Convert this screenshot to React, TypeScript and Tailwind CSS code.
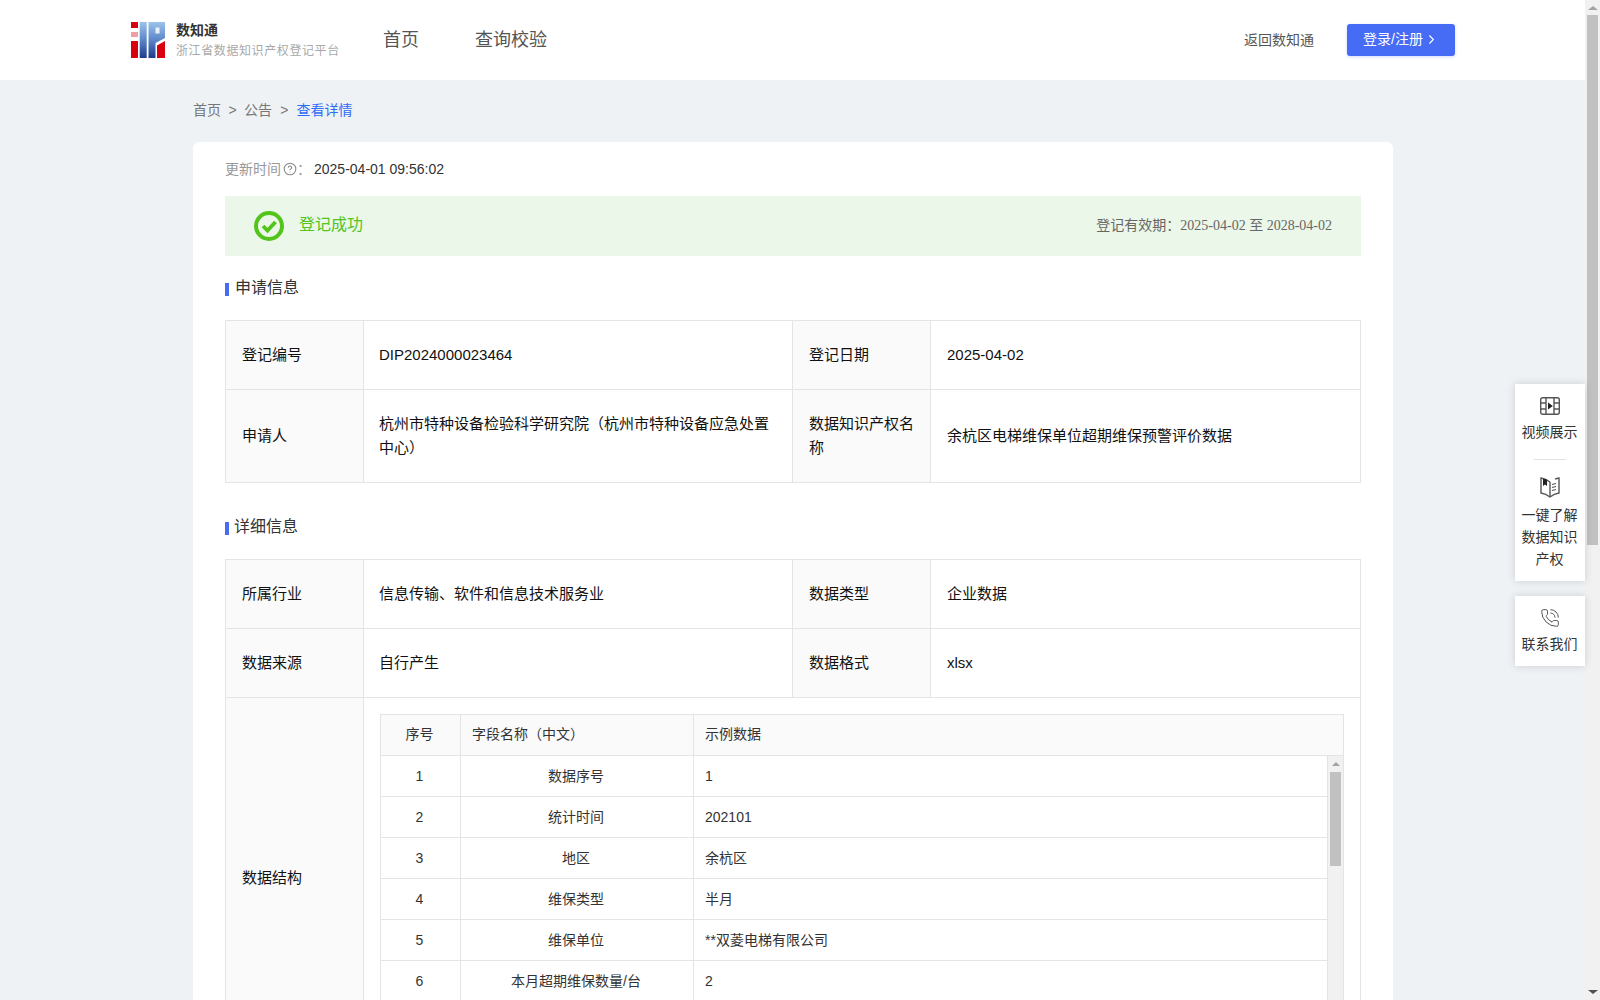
import { ChevronRight, CircleHelp, PhoneCall } from "lucide-react";

const FONT = "[font-family:'Liberation_Sans','Noto_Sans_CJK_SC',sans-serif]";

function Logo() {
  return (
    <svg width="34" height="36" viewBox="0 0 34 36" className="shrink-0">
      <defs>
        <linearGradient id="lg" x1="0" y1="0" x2="0" y2="1">
          <stop offset="0" stopColor="#9cc3ea" />
          <stop offset="0.5" stopColor="#5c86c8" />
          <stop offset="1" stopColor="#1d3a8c" />
        </linearGradient>
      </defs>
      <rect x="0" y="0" width="7" height="6" fill="#d9000f" />
      <rect x="0" y="10" width="7" height="5" fill="#f0a0a5" />
      <rect x="0" y="19" width="7" height="17" fill="#d9000f" />
      <rect x="8.7" y="0" width="7" height="36" fill="url(#lg)" />
      <path d="M17.5 0H34V16L24.5 21V36H17.5Z" fill="url(#lg)" />
      <rect x="24.5" y="5.5" width="4" height="6" fill="#e8f1fb" />
      <path d="M26 23.5L34 19V36H26Z" fill="#d9000f" />
    </svg>
  );
}

function FilmIcon() {
  return (
    <svg width="20" height="18" viewBox="0 0 20 18" fill="none" stroke="#555" strokeWidth="1.4">
      <rect x="0.7" y="0.7" width="18.6" height="16.6" rx="2" />
      <path d="M6 1V17M14 1V17M1 6H6M1 12H6M14 6H19M14 12H19" />
      <path d="M8 5.4L12.8 9L8 12.6Z" fill="#222" stroke="none" />
    </svg>
  );
}

function BookIcon() {
  return (
    <svg width="20" height="21" viewBox="0 0 20 21" fill="none" stroke="#555" strokeWidth="1.4">
      <path d="M10 5C7.5 3 4.5 1.5 1 1V16C4.5 16.5 7.5 18 10 20C12.5 18 15.5 16.5 19 16V1C17.5 1.2 16.2 1.6 15 2.2" />
      <path d="M10 5V20" />
      <path d="M3 1.4V9L5 7.5L7 9V2.8Z" fill="#222" stroke="none" />
      <path d="M12 7.5L16 6.5M12 10.5L16 9.5M12 13.5L16 12.5" strokeWidth="1.1" />
    </svg>
  );
}

function SuccessIcon() {
  return (
    <svg width="30" height="30" viewBox="0 0 30 30" fill="none" className="shrink-0">
      <circle cx="15" cy="15" r="13" stroke="#52c41a" strokeWidth="4" />
      <path d="M9 15L13.5 19.5L21.5 11" stroke="#52c41a" strokeWidth="3.8" />
    </svg>
  );
}

function Heading({ title, gap }: { title: string; gap: string }) {
  return (
    <div className="flex items-center h-[26px]">
      <span className="w-1 h-[13px] bg-[#466cf5] mt-[2px]" />
      <span className={`${gap} text-base text-[#333]`}>{title}</span>
    </div>
  );
}

const labelCell = "border border-[#e4e4e4] bg-[#fafafa] px-4 py-0 text-[15px] leading-6 text-[#111] font-normal text-left";
const valueCell = "border border-[#e4e4e4] bg-white px-4 py-0 text-[15px] leading-6 text-[#111] font-normal text-left";
const valueCellFirst = "border border-[#e4e4e4] bg-white pl-[15px] pr-4 py-0 text-[15px] leading-6 text-[#111] font-normal text-left";

const rows = [
  ["1", "数据序号", "1"],
  ["2", "统计时间", "202101"],
  ["3", "地区", "余杭区"],
  ["4", "维保类型", "半月"],
  ["5", "维保单位", "**双菱电梯有限公司"],
  ["6", "本月超期维保数量/台", "2"],
];

function InnerTable() {
  return (
    <div className="border-l border-r border-t border-[#e4e4e4] w-[964px]">
      <div className="grid grid-cols-[80px_233px_1fr] h-[41px] bg-[#fafafa] border-b border-[#e4e4e4] text-sm text-[#333] items-center">
        <div className="h-full flex items-center justify-center border-r border-[#e4e4e4] pb-[2px] pr-[2px]">序号</div>
        <div className="h-full flex items-center pl-[11px] border-r border-[#e4e4e4] pb-[2px]">字段名称（中文）</div>
        <div className="pl-[11px] pb-[2px]">示例数据</div>
      </div>
      <div className="flex h-[286px] overflow-hidden">
        <div className="flex-1 min-w-0">
          {rows.map((r) => (
            <div key={r[0]} className="grid grid-cols-[80px_233px_1fr] h-[41px] border-b border-r border-[#e4e4e4] text-sm text-[#333] items-center">
              <div className="h-full flex items-center justify-center border-r border-[#e4e4e4] pr-[2px]">{r[0]}</div>
              <div className="h-full flex items-center justify-center border-r border-[#e4e4e4] pr-[2px]">{r[1]}</div>
              <div className="pl-[11px]">{r[2]}</div>
            </div>
          ))}
        </div>
        <div className="w-[15px] shrink-0 bg-[#f1f1f1] flex flex-col items-center">
          <div className="mt-[6px] w-0 h-0 border-l-[4px] border-r-[4px] border-b-[4px] border-l-transparent border-r-transparent border-b-[#a3a3a3]" />
          <div className="mt-[6px] w-[11px] h-[94px] bg-[#c1c1c1]" />
        </div>
      </div>
    </div>
  );
}

export default function App() {
  return (
    <div className={`relative flex h-screen w-full overflow-hidden bg-[#eff2f5] ${FONT}`}>
      <div className="flex-1 min-w-0 overflow-hidden">
        <header className="h-20 bg-white flex items-center pl-[131px] pr-[130px]">
          <Logo />
          <div className="ml-[11px] w-[207px] shrink-0 pt-[1px]">
            <div className="text-sm font-bold leading-[18px] text-[#333]">数知通</div>
            <div className="mt-[3px] text-xs tracking-[0.6px] leading-[18px] text-[#a9a9a9]">浙江省数据知识产权登记平台</div>
          </div>
          <nav className="flex gap-[56px] text-lg text-[#555]">
            <span>首页</span>
            <span>查询校验</span>
          </nav>
          <div className="ml-auto text-sm text-[#555]">返回数知通</div>
          <button className="ml-[33px] w-[108px] h-8 rounded-[3px] bg-[#466cf5] text-white text-sm flex items-center justify-center gap-[1px] pb-[2px] shadow-[0_1px_3px_rgba(70,108,245,0.25)]">
            登录/注册
            <ChevronRight size={15} strokeWidth={1.8} />
          </button>
        </header>

        <div className="w-[1200px] ml-[193px]">
          <div className="h-[62px] flex items-center text-sm text-[#777] pb-[2px]">
            <span>首页</span>
            <span className="mx-[7.4px]">&gt;</span>
            <span>公告</span>
            <span className="mx-[8.2px]">&gt;</span>
            <span className="text-[#2f6bf6]">查看详情</span>
          </div>

          <main className="bg-white rounded-t-[6px] px-8 pt-[15px]">
            <div className="flex items-center h-[24px] text-sm text-[#999]">
              <span>更新时间</span>
              <CircleHelp size={14} strokeWidth={1.8} className="ml-[2px] text-[#888]" />
              <span>：</span>
              <span className="ml-[3px] text-[#333]">2025-04-01 09:56:02</span>
            </div>

            <div className="mt-[15px] h-[60px] bg-[#ebf7e8] flex items-center pl-[29px] pr-[29px]">
              <SuccessIcon />
              <span className="ml-[15px] text-base text-[#52c41a] pb-[2px]">登记成功</span>
              <span className="ml-auto text-sm text-[#666] pb-[2px]">
                登记有效期：<span className="[font-family:'Liberation_Serif','Noto_Sans_CJK_SC',serif]">2025-04-02 至 2028-04-02</span>
              </span>
            </div>

            <div className="mt-[19px]">
              <Heading title="申请信息" gap="ml-[6px]" />
            </div>

            <table className="mt-[19px] w-[1135px] table-fixed border-collapse">
              <colgroup>
                <col className="w-[138px]" />
                <col className="w-[429px]" />
                <col className="w-[138px]" />
                <col className="w-[430px]" />
              </colgroup>
              <tbody>
                <tr className="h-[69px]">
                  <th className={labelCell}>登记编号</th>
                  <td className={valueCellFirst}>DIP2024000023464</td>
                  <th className={labelCell}>登记日期</th>
                  <td className={valueCell}>2025-04-02</td>
                </tr>
                <tr className="h-[93px]">
                  <th className={labelCell}>申请人</th>
                  <td className={valueCellFirst}>杭州市特种设备检验科学研究院（杭州市特种设备应急处置中心）</td>
                  <th className={labelCell}>数据知识产权名称</th>
                  <td className={valueCell}>余杭区电梯维保单位超期维保预警评价数据</td>
                </tr>
              </tbody>
            </table>

            <div className="mt-[31px]">
              <Heading title="详细信息" gap="ml-[5px]" />
            </div>

            <table className="mt-[19px] w-[1135px] table-fixed border-collapse">
              <colgroup>
                <col className="w-[138px]" />
                <col className="w-[429px]" />
                <col className="w-[138px]" />
                <col className="w-[430px]" />
              </colgroup>
              <tbody>
                <tr className="h-[69px]">
                  <th className={labelCell}>所属行业</th>
                  <td className={valueCellFirst}>信息传输、软件和信息技术服务业</td>
                  <th className={labelCell}>数据类型</th>
                  <td className={valueCell}>企业数据</td>
                </tr>
                <tr className="h-[69px]">
                  <th className={labelCell}>数据来源</th>
                  <td className={valueCellFirst}>自行产生</td>
                  <th className={labelCell}>数据格式</th>
                  <td className={valueCell}>xlsx</td>
                </tr>
                <tr>
                  <th className={labelCell}>数据结构</th>
                  <td colSpan={3} className="border border-[#e4e4e4] bg-white p-4 align-top">
                    <InnerTable />
                  </td>
                </tr>
              </tbody>
            </table>
          </main>
        </div>
      </div>

      <div className="w-[15px] shrink-0 h-full bg-[#f1f1f1] flex flex-col items-center">
        <div className="mt-[6px] w-0 h-0 border-l-[5px] border-r-[5px] border-b-[4px] border-l-transparent border-r-transparent border-b-[#a3a3a3]" />
        <div className="mt-[5px] w-[11px] h-[530px] bg-[#c1c1c1]" />
        <div className="mt-auto mb-[6px] w-0 h-0 border-l-[5px] border-r-[5px] border-t-[4px] border-l-transparent border-r-transparent border-t-[#505050]" />
      </div>

      <div className="absolute right-[15px] top-[384px] w-[70px] flex flex-col gap-[15px] text-sm text-[#333]">
        <div className="bg-white shadow-[0_0_8px_rgba(0,0,0,0.15)] flex flex-col items-center pt-[13px] pr-[1px] h-[197px]">
          <FilmIcon />
          <div className="mt-[6px] leading-[22px]">视频展示</div>
          <div className="mt-[16px] w-8 h-px bg-[#e2e2e2]" />
          <div className="mt-[17px]"><BookIcon /></div>
          <div className="mt-[6px] leading-[22px] text-center w-14">一键了解数据知识产权</div>
        </div>
        <div className="bg-white shadow-[0_0_8px_rgba(0,0,0,0.15)] flex flex-col items-center pt-3 pr-[1px] h-[70px]">
          <PhoneCall size={20} strokeWidth={1.2} className="text-[#555]" />
          <div className="mt-[5px] leading-[22px]">联系我们</div>
        </div>
      </div>
    </div>
  );
}
